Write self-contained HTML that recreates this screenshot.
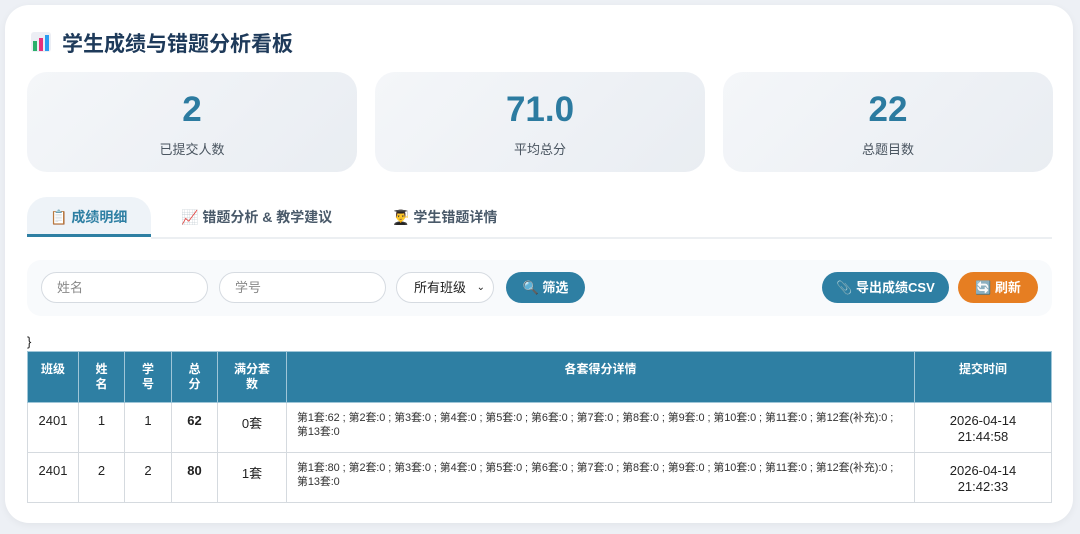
<!DOCTYPE html>
<html><head><meta charset="utf-8"><style>
*{box-sizing:border-box;margin:0;padding:0}
body{width:1080px;height:534px;background:#edf0f5;font-family:"Liberation Sans","Noto Sans CJK SC",sans-serif;position:relative;overflow:hidden}
.card{position:absolute;left:5px;top:5px;width:1068px;height:518px;background:#fff;border-radius:24px;box-shadow:0 2px 8px rgba(0,0,0,.05)}
.abs{position:absolute}
h1{position:absolute;left:62px;top:28px;font-size:21px;font-weight:bold;color:#1e3a5a}
.stat{position:absolute;top:72px;height:100px;width:330px;border-radius:20px;background:linear-gradient(135deg,#f4f6f9,#e9edf2);text-align:center}
.stat b{display:block;font-size:35px;color:#2c7ba0;margin-top:18px;line-height:40px}
.stat span{display:block;font-size:13px;color:#4a5560;margin-top:9px}
.tab{position:absolute;top:197px;height:40px;font-size:14px;font-weight:bold;color:#4a5a6a;line-height:40px}
.filter{position:absolute;left:27px;top:260px;width:1025px;height:56px;background:#f8fafc;border-radius:14px}
.inp{position:absolute;top:272px;height:31px;border:1px solid #d6dbe1;border-radius:16px;background:#fff;font-size:13px;color:#888;line-height:29px;padding-left:15px}
.btn{position:absolute;top:272px;height:31px;border-radius:16px;color:#fff;font-size:13px;font-weight:bold;line-height:31px;text-align:center}
table{position:absolute;left:27px;top:351px;width:1025px;border-collapse:collapse;font-size:13px}
th{background:#2e7fa3;color:#fff;font-weight:bold;font-size:12px;height:51px;border:1px solid #9fc6d8;vertical-align:top;padding-top:10px;line-height:15px}
td{height:50px;border:1px solid #d5dadf;text-align:center;color:#222;vertical-align:top;padding-top:10px}
td.d{text-align:left;font-size:10.9px;padding:8px 10px 0;line-height:14px;color:#333;white-space:nowrap;letter-spacing:-0.05px}
</style></head><body>
<div class="card"></div>
<div class="abs" style="left:31px;top:32px;width:20px;height:20px;background:#eceef4;border-radius:3px">
<div class="abs" style="left:2px;top:9px;width:4px;height:10px;background:#2ab06a"></div>
<div class="abs" style="left:8px;top:6px;width:4px;height:13px;background:#e8317a"></div>
<div class="abs" style="left:14px;top:3px;width:4px;height:16px;background:#2a9df0"></div></div>
<h1>学生成绩与错题分析看板</h1>
<div class="stat" style="left:27px"><b>2</b><span>已提交人数</span></div>
<div class="stat" style="left:375px"><b>71.0</b><span>平均总分</span></div>
<div class="stat" style="left:723px"><b>22</b><span>总题目数</span></div>
<div class="abs" style="left:27px;top:197px;width:124px;height:40px;background:#eef3f8;border-radius:20px 20px 0 0"></div>
<div class="abs" style="left:27px;top:234px;width:124px;height:3px;background:#2e7fa3"></div>
<div class="abs" style="left:151px;top:237px;width:901px;height:2px;background:#eceff2"></div>
<div class="tab" style="left:50px;color:#2e7fa3">📋 成绩明细</div>
<div class="tab" style="left:181px">📈 错题分析 &amp; 教学建议</div>
<div class="tab" style="left:392px">👨‍🎓 学生错题详情</div>
<div class="filter"></div>
<div class="inp" style="left:41px;width:167px">姓名</div>
<div class="inp" style="left:219px;width:167px">学号</div>
<div class="inp" style="left:396px;width:98px;color:#222;padding-left:17px">所有班级<span style="position:absolute;right:8px;font-size:10px">⌄</span></div>
<div class="btn" style="left:506px;width:79px;background:#2e7fa3">🔍 筛选</div>
<div class="btn" style="left:822px;width:127px;background:#2e7fa3">📎 导出成绩CSV</div>
<div class="btn" style="left:958px;width:80px;background:#e67e22">🔄 刷新</div>
<div class="abs" style="left:27px;top:334px;font-size:13px;color:#222">}</div>
<table>
<tr><th style="width:51px">班级</th><th style="width:46px">姓<br>名</th><th style="width:47px">学<br>号</th><th style="width:46px">总<br>分</th><th style="width:69px">满分套<br>数</th><th style="width:628px">各套得分详情</th><th>提交时间</th></tr>
<tr><td>2401</td><td>1</td><td>1</td><td><b>62</b></td><td>0套</td><td class="d">第1套:62 ; 第2套:0 ; 第3套:0 ; 第4套:0 ; 第5套:0 ; 第6套:0 ; 第7套:0 ; 第8套:0 ; 第9套:0 ; 第10套:0 ; 第11套:0 ; 第12套(补充):0 ;<br>第13套:0</td><td style="line-height:16px">2026-04-14<br>21:44:58</td></tr>
<tr><td>2401</td><td>2</td><td>2</td><td><b>80</b></td><td>1套</td><td class="d">第1套:80 ; 第2套:0 ; 第3套:0 ; 第4套:0 ; 第5套:0 ; 第6套:0 ; 第7套:0 ; 第8套:0 ; 第9套:0 ; 第10套:0 ; 第11套:0 ; 第12套(补充):0 ;<br>第13套:0</td><td style="line-height:16px">2026-04-14<br>21:42:33</td></tr>
</table>
</body></html>
